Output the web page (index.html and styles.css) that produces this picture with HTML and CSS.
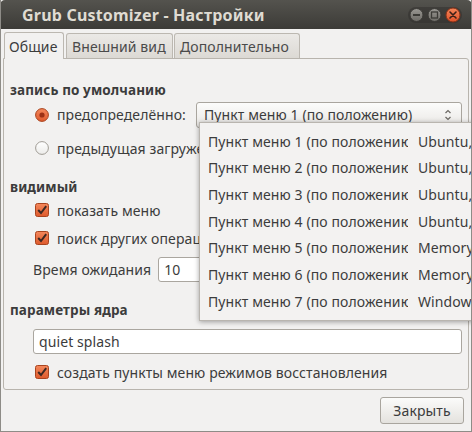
FILE: index.html
```html
<!DOCTYPE html>
<html lang="ru">
<head>
<meta charset="utf-8">
<title>Grub Customizer - Настройки</title>
<link rel="stylesheet" href="styles.css">
</head>
<body>
<div class="window">
  <div class="titlebar">
    <span class="title">Grub Customizer - Настройки</span>
    <svg class="wm" width="54" height="18" viewBox="0 0 54 18">
      <defs>
        <linearGradient id="g" x1="0" y1="0" x2="0" y2="1">
          <stop offset="0" stop-color="#9a9893"/>
          <stop offset="1" stop-color="#6c6a65"/>
        </linearGradient>
        <linearGradient id="o" x1="0" y1="0" x2="0" y2="1">
          <stop offset="0" stop-color="#f5865a"/>
          <stop offset="1" stop-color="#e0532a"/>
        </linearGradient>
      </defs>
      <rect x="0" y="1" width="54" height="16" rx="8" fill="#2f2e2b" opacity="0.5"/>
      <circle cx="8.5" cy="9" r="6.5" fill="url(#g)" stroke="#3a3935" stroke-width="1"/>
      <rect x="5" y="8" width="7" height="2" fill="#3c3b37"/>
      <circle cx="26.5" cy="9" r="6.5" fill="url(#g)" stroke="#3a3935" stroke-width="1"/>
      <rect x="23.5" y="6" width="6" height="6" fill="none" stroke="#3c3b37" stroke-width="1.3"/>
      <circle cx="45" cy="9" r="7" fill="url(#o)" stroke="#8a3217" stroke-width="1"/>
      <path d="M42 6 L48 12 M48 6 L42 12" stroke="#3c2018" stroke-width="1.6" stroke-linecap="round"/>
    </svg>
  </div>

  <div class="tabs">
    <div class="tab active tab-general">Общие</div>
    <div class="tab tab-look">Внешний вид</div>
    <div class="tab tab-extra">Дополнительно</div>
  </div>

  <div class="panel">
    <div class="hdr hdr-default">запись по умолчанию</div>
    <div class="row opt-predef">
      <svg class="mark" width="14" height="14" viewBox="0 0 14 14">
        <defs>
          <linearGradient id="ro" x1="0" y1="0" x2="0" y2="1">
            <stop offset="0" stop-color="#f4885c"/>
            <stop offset="1" stop-color="#df5a2d"/>
          </linearGradient>
        </defs>
        <circle cx="7" cy="7" r="6.4" fill="url(#ro)" stroke="#a9441f" stroke-width="1"/>
        <circle cx="7" cy="7" r="2.6" fill="#9c3115"/>
      </svg>
      <span class="lbl">предопределённо:</span>
      <div class="combo">
        <span class="combo-text">Пункт меню 1 (по положению)</span>
        <svg class="arrows" width="8" height="14" viewBox="0 0 8 14">
          <path d="M1.5 5 L4 2.5 L6.5 5 M1.5 9 L4 11.5 L6.5 9" fill="none" stroke="#6b6863" stroke-width="1.2"/>
        </svg>
      </div>
    </div>
    <div class="row opt-prev">
      <svg class="mark" width="14" height="14" viewBox="0 0 14 14">
        <defs>
          <linearGradient id="rw" x1="0" y1="0" x2="0" y2="1">
            <stop offset="0" stop-color="#ffffff"/>
            <stop offset="1" stop-color="#ecebe9"/>
          </linearGradient>
        </defs>
        <circle cx="7" cy="7" r="6.4" fill="url(#rw)" stroke="#9f9b94" stroke-width="1"/>
      </svg>
      <span class="lbl">предыдущая загруженная запись</span>
    </div>

    <div class="hdr hdr-visible">видимый</div>
    <div class="row chk-menu">
      <svg class="mark" width="14" height="14" viewBox="0 0 14 14">
        <defs>
          <linearGradient id="co" x1="0" y1="0" x2="0" y2="1">
            <stop offset="0" stop-color="#f4885c"/>
            <stop offset="1" stop-color="#de5a2c"/>
          </linearGradient>
        </defs>
        <rect x="0.5" y="0.5" width="13" height="13" rx="2" fill="url(#co)" stroke="#a9441f"/>
        <path d="M3.2 7 L6 10 L11.2 3.2" fill="none" stroke="#3d2822" stroke-width="2"/>
      </svg>
      <span class="lbl">показать меню</span>
    </div>
    <div class="row chk-os">
      <svg class="mark" width="14" height="14" viewBox="0 0 14 14">
        <rect x="0.5" y="0.5" width="13" height="13" rx="2" fill="url(#co)" stroke="#a9441f"/>
        <path d="M3.2 7 L6 10 L11.2 3.2" fill="none" stroke="#3d2822" stroke-width="2"/>
      </svg>
      <span class="lbl">поиск других операционных систем</span>
    </div>
    <div class="row timeout">
      <span class="lbl-plain">Время ожидания</span>
      <div class="spin">10</div>
    </div>

    <div class="hdr hdr-kernel">параметры ядра</div>
    <div class="entry">quiet splash</div>
    <div class="row chk-recovery">
      <svg class="mark" width="14" height="14" viewBox="0 0 14 14">
        <rect x="0.5" y="0.5" width="13" height="13" rx="2" fill="url(#co)" stroke="#a9441f"/>
        <path d="M3.2 7 L6 10 L11.2 3.2" fill="none" stroke="#3d2822" stroke-width="2"/>
      </svg>
      <span class="lbl">создать пункты меню режимов восстановления</span>
    </div>
  </div>

  <div class="actions">
    <div class="btn">Закрыть</div>
  </div>

  <div class="popup">
    <div class="item"><span class="c1">Пункт меню 1 (по положению)</span><span class="c2">Ubuntu, Linux</span></div>
    <div class="item"><span class="c1">Пункт меню 2 (по положению)</span><span class="c2">Ubuntu, Linux</span></div>
    <div class="item"><span class="c1">Пункт меню 3 (по положению)</span><span class="c2">Ubuntu, Linux</span></div>
    <div class="item"><span class="c1">Пункт меню 4 (по положению)</span><span class="c2">Ubuntu, Linux</span></div>
    <div class="item"><span class="c1">Пункт меню 5 (по положению)</span><span class="c2">Memory test</span></div>
    <div class="item"><span class="c1">Пункт меню 6 (по положению)</span><span class="c2">Memory test</span></div>
    <div class="item"><span class="c1">Пункт меню 7 (по положению)</span><span class="c2">Windows 7</span></div>
  </div>
</div>
</body>
</html>
```

FILE: styles.css
```css
* { box-sizing: border-box; }

html, body {
  margin: 0;
  padding: 0;
  background: #f2f1f0;
}

body {
  width: 472px;
  height: 432px;
  overflow: hidden;
  font-family: "Noto Sans", "DejaVu Sans", sans-serif;
  font-size: 14px;
  letter-spacing: 0.1px;
  color: #3c3c3c;
}

.window {
  position: relative;
  width: 472px;
  height: 432px;
  overflow: hidden;
  background: #f2f1f0;
  border-left: 1px solid #8e8c87;
  border-right: 1px solid #8e8c87;
  border-bottom: 1px solid #8e8c87;
}

.titlebar {
  height: 29px;
  margin: 0 -1px;
  display: flex;
  align-items: center;
  justify-content: space-between;
  padding: 0 10px 0 22px;
  background: linear-gradient(#54534e, #3c3b37);
  border-radius: 5px 5px 0 0;
}

.title {
  font-weight: bold;
  font-size: 16px;
  color: #dfdbd2;
  letter-spacing: 0.2px;
}

.wm { display: block; margin-top: 1px; }

/* tabs */
.tabs {
  display: flex;
  align-items: flex-end;
  gap: 1px;
  height: 26px;
  margin: 3px 0 0 3px;
}

.tab {
  height: 25px;
  display: flex;
  align-items: center;
  white-space: nowrap;
  padding: 0 4px 0 5px;
  border: 1px solid #bcb8b1;
  border-bottom: none;
  border-radius: 3px 3px 0 0;
  background: linear-gradient(#ebe9e6, #dcd9d4);
  color: #4a4a4a;
}

.tab.active {
  height: 27px;
  margin-bottom: -1px;
  position: relative;
  z-index: 1;
  background: #f2f1f0;
  color: #3c3c3c;
  padding: 0 4px;
  margin-right: 1px;
}

.tab-general { width: 60px; }
.tab-look { width: 107px; }
.tab-extra { width: 126px; }

/* panel */
.panel {
  height: 332px;
  margin: 0 2px 0 2px;
  padding: 0 6px 0 6px;
  border: 1px solid #b8b4ad;
  border-radius: 0 3px 3px 3px;
  background: #f2f1f0;
}

.hdr {
  height: 20px;
  display: flex;
  align-items: center;
  font-weight: bold;
  font-size: 13.5px;
  letter-spacing: 0.1px;
}

.hdr-default { margin-top: 21px; }
.hdr-visible { margin-top: 15px; }
.hdr-kernel { margin-top: 18px; }

.row {
  display: flex;
  align-items: center;
  padding-left: 25px;
  height: 22px;
  white-space: nowrap;
}

.mark { display: block; flex: none; }
.lbl { margin-left: 8px; }

.opt-predef { height: 27px; margin-top: 1px; }
.opt-prev { height: 28px; margin-top: 6px; }
.chk-menu { margin-top: 2px; }
.chk-os { margin-top: 6px; }
.timeout { height: 25px; margin-top: 8px; padding-left: 23px; }
.chk-recovery { margin-top: 7px; }

.combo {
  margin-left: auto;
  width: 266px;
  height: 26px;
  display: flex;
  align-items: center;
  justify-content: space-between;
  padding: 0 9px 0 7px;
  border: 1px solid #a9a59e;
  border-radius: 3px;
  background: linear-gradient(#fcfcfb, #e9e7e4);
}

.arrows { display: block; }

.spin {
  margin-left: 7px;
  width: 90px;
  height: 25px;
  display: flex;
  align-items: center;
  padding-left: 5px;
  border: 1px solid #aaa69f;
  border-radius: 3px;
  background: #ffffff;
}

.entry {
  margin: 9px 0 0 23px;
  height: 25px;
  display: flex;
  align-items: center;
  padding-left: 5px;
  border: 1px solid #aaa69f;
  border-radius: 3px;
  background: #ffffff;
}

/* bottom buttons */
.actions {
  display: flex;
  justify-content: flex-end;
  padding: 7px 7px 0 0;
}

.btn {
  width: 84px;
  height: 27px;
  display: flex;
  align-items: center;
  justify-content: center;
  border: 1px solid #a9a59e;
  border-radius: 3px;
  background: linear-gradient(#fbfbfa, #e4e2de);
}

/* combo popup */
.popup {
  position: absolute;
  left: 198px;
  top: 122px;
  width: 300px;
  padding: 5px 0;
  border: 1px solid #b9b5af;
  background: #f3f2f1;
  box-shadow: 0 1px 5px rgba(0, 0, 0, 0.35);
}

.item {
  height: 26.67px;
  display: flex;
  align-items: center;
  padding-left: 8px;
  white-space: nowrap;
}

.c1 {
  width: 200px;
  overflow: hidden;
  flex: none;
}

.c2 {
  margin-left: 10px;
}
```
